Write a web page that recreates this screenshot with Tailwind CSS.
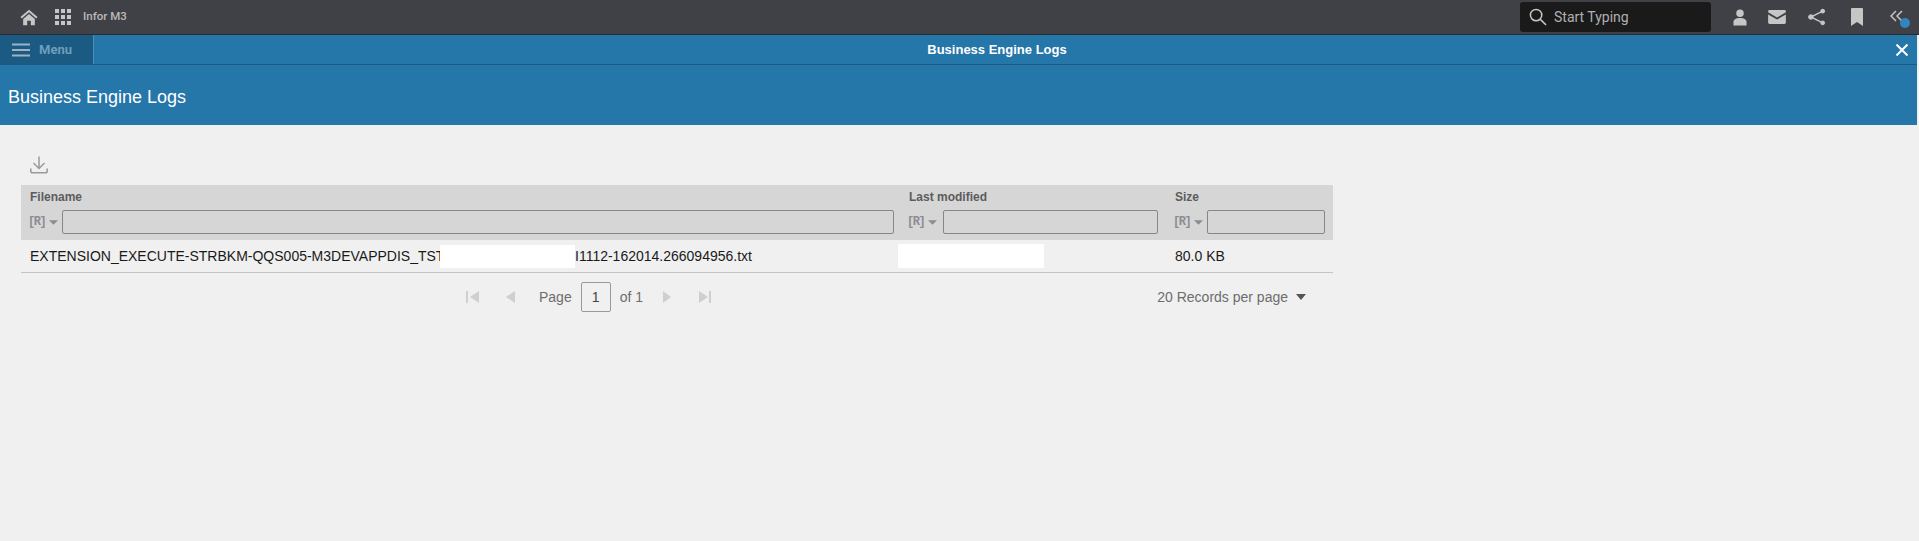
<!DOCTYPE html>
<html lang="en">
  <head>
    <meta charset="UTF-8" />
    <title>Business Engine Logs</title>
    <script src="https://cdn.jsdelivr.net/npm/@tailwindcss/browser@4"></script>
  </head>
  <body class="bg-[#f0f0f0] h-[541px] overflow-hidden font-['Liberation_Sans',sans-serif]">
    <!-- Top bar -->
    <div class="h-[35px] bg-[#404146] border-b border-b-[#2b2c30] flex items-center pl-[20px] pr-[5px]">
      <svg class="w-[18px] h-[17px] text-[#c6c6c6]" viewBox="0 0 20 18" fill="currentColor"><path d="M10 0.5 L0.5 8.5 L2 10 L10 3.2 L18 10 L19.5 8.5 Z"/><path d="M10 5 L3.5 10.6 V17.5 H8 V12.5 H12 V17.5 H16.5 V10.6 Z"/></svg>
      <div class="ml-[17px] grid grid-cols-3 gap-[2px] w-[16px]">
        <i class="w-[4px] h-[4px] bg-[#c6c6c6]"></i><i class="w-[4px] h-[4px] bg-[#c6c6c6]"></i><i class="w-[4px] h-[4px] bg-[#c6c6c6]"></i>
        <i class="w-[4px] h-[4px] bg-[#c6c6c6]"></i><i class="w-[4px] h-[4px] bg-[#c6c6c6]"></i><i class="w-[4px] h-[4px] bg-[#c6c6c6]"></i>
        <i class="w-[4px] h-[4px] bg-[#c6c6c6]"></i><i class="w-[4px] h-[4px] bg-[#c6c6c6]"></i><i class="w-[4px] h-[4px] bg-[#c6c6c6]"></i>
      </div>
      <span class="ml-[12px] text-[11.5px] font-medium text-[#b9b9b9] font-['Roboto',sans-serif]">Infor M3</span>

      <div class="ml-auto w-[191px] h-[30px] bg-[#1a1a1a] rounded-[3px] flex items-center pl-[9px]">
        <svg class="w-[18px] h-[18px] text-[#c6c6c6]" viewBox="0 0 19 19" fill="none" stroke="currentColor" stroke-width="1.6"><circle cx="7.5" cy="7.5" r="6"/><path d="M12 12 L18 18"/></svg>
        <span class="ml-[7px] text-[14px] text-[#b0b0b0] font-['Roboto',sans-serif]">Start Typing</span>
      </div>
      <div class="ml-[22px] flex items-center">
        <svg class="w-[14px] h-[17px] text-[#c6c6c6]" viewBox="0 0 15 18" fill="currentColor"><circle cx="7.5" cy="4.5" r="4"/><path d="M0.5 17.5 V14 C0.5 11 3.5 9.5 7.5 9.5 C11.5 9.5 14.5 11 14.5 14 V17.5 Z"/></svg>
        <svg class="ml-[21px] w-[18px] h-[14px] text-[#c6c6c6]" viewBox="0 0 19 15" fill="currentColor"><path d="M1.5 0 H17.5 Q19 0 19 1.5 V2.5 L9.5 8 L0 2.5 V1.5 Q0 0 1.5 0 Z"/><path d="M0 4.8 L9.5 10.3 L19 4.8 V13.5 Q19 15 17.5 15 H1.5 Q0 15 0 13.5 Z"/></svg>
        <svg class="ml-[22px] w-[18px] h-[18px] text-[#c6c6c6]" viewBox="0 0 19 18" fill="currentColor" stroke="currentColor"><circle cx="15.5" cy="2.8" r="2"/><circle cx="3" cy="9" r="2.4"/><circle cx="15.5" cy="15.2" r="2"/><path d="M15.5 2.8 L3 9 L15.5 15.2" fill="none" stroke-width="1.5"/></svg>
        <svg class="ml-[25px] w-[12px] h-[18px] text-[#c6c6c6]" viewBox="0 0 12 18" fill="currentColor"><path d="M0 1 Q0 0 1 0 H11 Q12 0 12 1 V18 L6 14 L0 18 Z"/></svg>
        <div class="relative ml-[27px] w-[24px] h-[24px]">
          <svg class="w-[13px] h-[13px] text-[#c6c6c6] mt-[5px]" viewBox="0 0 13 13" fill="none" stroke="currentColor" stroke-width="1.5"><path d="M6 1 L1 6 L6 11"/><path d="M12 1 L7 6 L12 11"/></svg>
          <span class="absolute left-[10px] top-[13px] w-[10px] h-[10px] rounded-full bg-[#2f86c1]"></span>
        </div>
      </div>
    </div>

    <!-- Blue header -->
    <div class="bg-[#2576a9] w-[1917px]">
      <div class="relative h-[30px] border-b border-b-[#1b5a82] flex items-center justify-center pl-[77px]">
        <div class="absolute left-0 top-0 h-[29px] w-[94px] bg-[#1b5a82] border-r border-r-[#4a8fbb] flex items-center pl-[12px]">
          <svg class="w-[18px] h-[14px] text-[#9db3c2]" viewBox="0 0 18 14" fill="currentColor"><rect width="18" height="2" y="0.5"/><rect width="18" height="2" y="6"/><rect width="18" height="2" y="11.5"/></svg>
          <span class="ml-[9px] text-[13px] font-bold text-[#6f9dbb] font-['Roboto',sans-serif]">Menu</span>
        </div>
        <span class="text-[13px] font-bold text-white">Business Engine Logs</span>
        <svg class="absolute right-[9px] top-[9px] w-[12px] h-[12px] text-white" viewBox="0 0 12 12" fill="none" stroke="currentColor" stroke-width="2"><path d="M0.5 0.5 L11.5 11.5 M11.5 0.5 L0.5 11.5"/></svg>
      </div>
      <div class="h-[60px] flex items-center pl-[8px] pt-[4px] text-[18px] text-white">Business Engine Logs</div>
    </div>

    <!-- Content -->
    <div class="w-[1312px] ml-[21px]">
      <div class="h-[60px] flex items-end pb-[11px] pl-[9px]">
        <svg class="w-[18px] h-[18px] text-[#9a9a9a]" viewBox="0 0 18 18" fill="none" stroke="currentColor" stroke-width="1.5"><path d="M9 0.5 V12 M3.5 7 L9 12.5 L14.5 7"/><path d="M0.8 12.5 V15 Q0.8 16.8 2.5 16.8 H15.5 Q17.2 16.8 17.2 15 V12.5"/></svg>
      </div>

      <div class="grid grid-cols-[879px_266px_167px] bg-[#d6d6d6] h-[55px] text-[#5c5c5c]">
        <div class="pl-[9px] pr-[6px] pt-[6px]">
          <div class="text-[12px] font-bold leading-[13px]">Filename</div>
          <div class="flex items-center mt-[6px]">
            <span class="w-[32px] -ml-[2px] mr-[2px] flex items-center text-[12px] font-bold tracking-[-1.5px] text-[#8c8c92] font-['Liberation_Mono',monospace]">[R]
              <svg class="ml-[4px] w-[9px] h-[5px] text-[#8c8c92]" viewBox="0 0 8 4" fill="currentColor"><path d="M0 0 H8 L4 4 Z"/></svg>
            </span>
            <div class="flex-1 h-[24px] border border-[#86868c] rounded-[2px]"></div>
          </div>
        </div>
        <div class="pl-[9px] pr-[8px] pt-[6px]">
          <div class="text-[12px] font-bold leading-[13px]">Last modified</div>
          <div class="flex items-center mt-[6px]">
            <span class="w-[34px] -ml-[2px] mr-[2px] flex items-center text-[12px] font-bold tracking-[-1.5px] text-[#8c8c92] font-['Liberation_Mono',monospace]">[R]
              <svg class="ml-[4px] w-[9px] h-[5px] text-[#8c8c92]" viewBox="0 0 8 4" fill="currentColor"><path d="M0 0 H8 L4 4 Z"/></svg>
            </span>
            <div class="flex-1 h-[24px] border border-[#86868c] rounded-[2px]"></div>
          </div>
        </div>
        <div class="pl-[9px] pr-[8px] pt-[6px]">
          <div class="text-[12px] font-bold leading-[13px]">Size</div>
          <div class="flex items-center mt-[6px]">
            <span class="w-[32px] -ml-[2px] mr-[2px] flex items-center text-[12px] font-bold tracking-[-1.5px] text-[#8c8c92] font-['Liberation_Mono',monospace]">[R]
              <svg class="ml-[4px] w-[9px] h-[5px] text-[#8c8c92]" viewBox="0 0 8 4" fill="currentColor"><path d="M0 0 H8 L4 4 Z"/></svg>
            </span>
            <div class="flex-1 h-[24px] border border-[#86868c] rounded-[2px]"></div>
          </div>
        </div>
      </div>

      <div class="grid grid-cols-[879px_266px_167px] h-[33px] border-b border-b-[#c4c4c4] items-center text-[14px] text-[#1a1a1a]">
        <div class="pl-[9px] flex items-center whitespace-nowrap">
          <span class="w-[410px]">EXTENSION_EXECUTE-STRBKM-QQS005-M3DEVAPPDIS_TST</span>
          <span class="w-[135px] h-[23px] bg-white"></span>
          <span>I1112-162014.266094956.txt</span>
        </div>
        <div><div class="-ml-[2px] w-[146px] h-[24px] bg-white"></div></div>
        <div class="pl-[9px]">80.0 KB</div>
      </div>

      <!-- Pagination -->
      <div class="relative h-[48px] flex items-center text-[14px] text-[#6d6d6d]">
        <div class="flex items-center ml-[445px]">
          <svg class="w-[13px] h-[12px] text-[#cfcfcf]" viewBox="0 0 13 12" fill="currentColor"><rect width="2" height="12"/><path d="M13 0 V12 L4 6 Z"/></svg>
          <svg class="ml-[27px] w-[9px] h-[12px] text-[#cfcfcf]" viewBox="0 0 9 12" fill="currentColor"><path d="M9 0 V12 L0 6 Z"/></svg>
          <span class="ml-[24px]">Page</span>
          <div class="ml-[9px] w-[30px] h-[30px] border border-[#9a9a9a] rounded-[2px] flex items-center justify-center text-[#444]">1</div>
          <span class="ml-[9px]">of 1</span>
          <svg class="ml-[20px] w-[8px] h-[12px] text-[#cfcfcf]" viewBox="0 0 8 12" fill="currentColor"><path d="M0 0 V12 L8 6 Z"/></svg>
          <svg class="ml-[28px] w-[12px] h-[12px] text-[#cfcfcf]" viewBox="0 0 12 12" fill="currentColor"><path d="M0 0 V12 L9 6 Z"/><rect x="10" width="2" height="12"/></svg>
        </div>
        <div class="absolute right-[27px] top-[16px] flex items-center leading-[16px]">
          <span>20 Records per page</span>
          <svg class="ml-[8px] w-[10px] h-[6px] text-[#555]" viewBox="0 0 10 6" fill="currentColor"><path d="M0 0 H10 L5 6 Z"/></svg>
        </div>
      </div>
    </div>
  </body>
</html>
